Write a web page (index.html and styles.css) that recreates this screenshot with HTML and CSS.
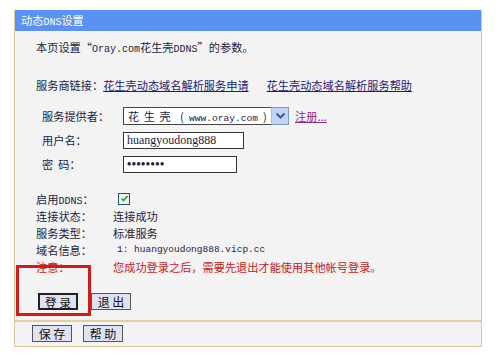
FILE: index.html
```html
<!DOCTYPE html>
<html lang="zh-CN">
<head>
    <meta charset="UTF-8">
    <title>动态DNS设置</title>
    <link rel="stylesheet" href="styles.css">
</head>
<body>
    <div class="panel">
        <div class="title">动态<span class="latin">DNS</span>设置</div>

        <div class="content">
            <p class="intro">本页设置“<span class="latin">Oray.com</span>花生壳<span class="latin">DDNS</span>”的参数。</p>
            <p class="links">服务商链接：<a href="#" class="link">花生壳动态域名解析服务申请</a><a href="#" class="link second">花生壳动态域名解析服务帮助</a></p>

            <div class="form">
                <div class="label">服务提供者：</div>
                <div class="field">
                    <div class="select">
                        <span class="select-text">花 生 壳 <span class="paren">(</span><span class="latin">www.oray.com</span><span class="paren">)</span></span>
                        <span class="select-arrow">
                            <svg width="11" height="8" viewBox="0 0 11 8"><path d="M1.5 1.5 L5.5 5.5 L9.5 1.5" fill="none" stroke="#3a5a9a" stroke-width="2"/></svg>
                        </span>
                    </div>
                    <a href="#" class="register">注册...</a>
                </div>
                <div class="label">用户名：</div>
                <div class="field"><div class="input user">huangyoudong888</div></div>
                <div class="label">密&nbsp;&nbsp;码：</div>
                <div class="field"><div class="input pass">••••••••</div></div>
            </div>

            <div class="status">
                <div class="label">启用<span class="latin">DDNS</span>：</div>
                <div class="value">
                    <span class="checkbox">
                        <svg width="9" height="9" viewBox="0 0 9 9"><path d="M1.5 4.5 L3.5 6.5 L7.5 2" fill="none" stroke="#2a9a2a" stroke-width="1.6"/></svg>
                    </span>
                </div>
                <div class="label">连接状态：</div>
                <div class="value">连接成功</div>
                <div class="label">服务类型：</div>
                <div class="value">标准服务</div>
                <div class="label">域名信息：</div>
                <div class="value latin domain">1: huangyoudong888.vicp.cc</div>
                <div class="label warn">注意：</div>
                <div class="value warn">您成功登录之后，需要先退出才能使用其他帐号登录。</div>
            </div>

            <div class="actions">
                <button class="btn default">登 录</button>
                <button class="btn">退 出</button>
            </div>
        </div>

        <div class="footer">
            <button class="btn">保 存</button>
            <button class="btn">帮 助</button>
        </div>

        <div class="highlight"></div>
    </div>
</body>
</html>
```

FILE: styles.css
```css
body {
    margin: 0;
    background: #ffffff;
    font-family: "Noto Sans CJK SC", "DejaVu Sans", sans-serif;
    font-size: 11.2px;
    color: #1c1c3c;
}

.latin {
    font-family: "Liberation Mono", "Noto Sans CJK SC", monospace;
    font-size: 10px;
}

.panel {
    position: relative;
    margin: 10px 0 0 14px;
    width: 466px;
    border: 1px solid #dcc697;
    border-top: none;
    background: #f3f3f3;
}

.title {
    height: 21px;
    line-height: 21px;
    padding-left: 6px;
    background: #5b91f3;
    color: #ffffff;
    font-size: 11.2px;
}

.content {
    padding: 8px 0 10px 21px;
    border-bottom: 2px solid #e2cfa4;
}

p {
    margin: 0;
    line-height: 16px;
}

.links {
    margin-top: 19px;
}

.link {
    color: #1a1a78;
    text-decoration: underline;
}

.link.second {
    margin-left: 18px;
}

.form {
    margin: 11px 0 0 6px;
    display: grid;
    grid-template-columns: 81px 1fr;
    grid-auto-rows: 24px;
    align-items: center;
}

.field {
    display: flex;
    align-items: center;
}

.select {
    display: flex;
    height: 16px;
    border: 1px solid #7f9db9;
    background: #ffffff;
}

.select-text {
    width: 143px;
    padding-left: 4px;
    line-height: 16px;
    font-size: 11.2px;
    letter-spacing: 1px;
    white-space: nowrap;
    border: 1px solid #444;
    border-right: none;
    margin: -1px 0 -1px -1px;
}

.select-text .paren {
    margin: 0 5px;
    letter-spacing: 0;
}

.select-text .latin {
    font-size: 9.6px;
    letter-spacing: 0;
}

.select-arrow {
    width: 16px;
    display: flex;
    align-items: center;
    justify-content: center;
    background: #c3d3f5;
    border-left: 1px solid #a8bde6;
}

.register {
    margin-left: 6px;
    color: #8a2a8a;
    text-decoration: underline;
}

.input {
    height: 15px;
    line-height: 15px;
    padding-left: 3px;
    border: 1px solid #333;
    background: #ffffff;
    font-family: "Liberation Serif", serif;
    font-size: 12px;
    box-sizing: content-box;
}

.input.user {
    width: 116px;
}

.input.pass {
    width: 109px;
    font-weight: bold;
    letter-spacing: 0.5px;
}

.status {
    margin-top: 14px;
    display: grid;
    grid-template-columns: 77px 1fr;
    grid-auto-rows: 17px;
    align-items: center;
}

.checkbox {
    display: flex;
    align-items: center;
    justify-content: center;
    width: 10px;
    height: 10px;
    margin-left: 5px;
    border: 1px solid #1c5180;
    background: #f0f8f0;
}

.domain {
    padding-left: 4px;
    font-size: 9.5px;
}

.warn {
    color: #c41a1a;
}

.actions {
    margin: 18px 0 0 2px;
    display: flex;
    gap: 13px;
}

.btn {
    height: 17px;
    width: 40px;
    padding: 0;
    border: 1px solid #555;
    background: #dfe2f3;
    font-family: "Noto Sans CJK SC", sans-serif;
    font-size: 12px;
    line-height: 15px;
    color: #111;
}

.btn.default {
    border: 2px solid #222;
}

.footer {
    display: flex;
    gap: 11px;
    padding: 3px 0 4px 17px;
}

.highlight {
    position: absolute;
    left: 1px;
    top: 255px;
    width: 69px;
    height: 45px;
    border: 3px solid #d11c1c;
}
```
